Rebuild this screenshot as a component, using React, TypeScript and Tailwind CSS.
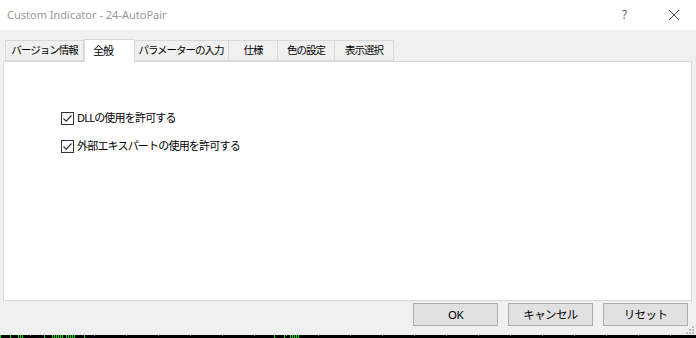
import React from "react";

const tabs = ["バージョン情報", "全般", "パラメーターの入力", "仕様", "色の設定", "表示選択"];
const tabWidths = [79, 51, 95, 49, 57, 59];

const greens = [0, 10, 18, 20, 22, 44, 52, 54, 56, 58, 60, 62, 66, 68, 70, 72, 74, 84, 274, 284, 290, 292, 294, 296, 298];

function CheckRow({ label }: { label: string }) {
  return (
    <label className="flex items-center gap-[3px] h-[14px] whitespace-nowrap">
      <span className="w-[13px] h-[13px] border border-[#333] bg-white flex items-center justify-center shrink-0">
        <svg width="11" height="11" viewBox="0 0 11 11">
          <path d="M1.5 5.5 L4.2 8.2 L9.5 2.5" fill="none" stroke="#333" strokeWidth="1.2" />
        </svg>
      </span>
      <span className="text-[11px] tracking-[-0.8px]">{label}</span>
    </label>
  );
}

export default function App() {
  return (
    <div
      className="w-[696px] h-[338px] bg-[#f0f0f0] flex flex-col text-[11.5px] tracking-[-0.6px] text-black overflow-hidden"
      style={{ fontFamily: '"Noto Sans", "Noto Sans CJK JP", sans-serif' }}
    >
      {/* Title bar */}
      <div className="h-[30px] bg-white flex items-center pl-[7px] shrink-0 tracking-normal">
        <span className="text-[#999] text-[11px]">Custom Indicator - 24-AutoPair</span>
        <span className="ml-auto text-[#666] text-[12px] w-[10px] mr-[36px]">?</span>
        <svg width="12" height="12" viewBox="0 0 12 12" className="mr-[16px]">
          <path d="M1 1 L11 11 M11 1 L1 11" stroke="#444" strokeWidth="1" />
        </svg>
      </div>

      {/* Tabs */}
      <div className="flex items-end h-[31px] pl-[5px] shrink-0 whitespace-nowrap text-[10.5px] tracking-[-1px]">
        {tabs.map((t, i) =>
          i === 1 ? (
            <div
              key={t}
              className="h-[23px] bg-white border border-b-0 border-[#d9d9d9] flex items-start pt-[3px] pl-[8px] -mb-px relative z-10 text-[11px]"
              style={{ width: tabWidths[i] }}
            >
              {t}
            </div>
          ) : (
            <div
              key={t}
              className="h-[21px] bg-[#f0f0f0] border border-[#d9d9d9] border-l-0 first:border-l flex items-center justify-center"
              style={{ width: tabWidths[i], marginLeft: i === 2 ? -1 : 0 }}
            >
              {t}
            </div>
          )
        )}
      </div>

      {/* Panel */}
      <div className="mx-[3px] mr-[4px] h-[240px] bg-white border border-[#d9d9d9] pt-[49px] pl-[57px] flex flex-col gap-[14px] shrink-0">
        <CheckRow label="DLLの使用を許可する" />
        <CheckRow label="外部エキスパートの使用を許可する" />
      </div>

      {/* Buttons */}
      <div className="flex justify-end gap-[10px] pr-[8px] pt-[2px] shrink-0">
        {["OK", "キャンセル", "リセット"].map((b) => (
          <button
            key={b}
            className="w-[85px] h-[23px] bg-[#e1e1e1] border border-[#adadad] flex items-center justify-center"
          >
            {b}
          </button>
        ))}
      </div>

      <div className="flex-1 flex justify-end items-end pr-[2px] pb-[1px]">
        <svg width="8" height="8" viewBox="0 0 8 8">
          <rect x="6" y="0" width="2" height="2" fill="#bcbcbc" />
          <rect x="3" y="3" width="2" height="2" fill="#bcbcbc" />
          <rect x="6" y="3" width="2" height="2" fill="#bcbcbc" />
          <rect x="0" y="6" width="2" height="2" fill="#bcbcbc" />
          <rect x="3" y="6" width="2" height="2" fill="#bcbcbc" />
          <rect x="6" y="6" width="2" height="2" fill="#bcbcbc" />
        </svg>
      </div>

      {/* Chart strip */}
      <svg width="696" height="4" className="block shrink-0">
        <rect width="696" height="4" fill="#000" />
        {Array.from({ length: 22 }, (_, i) => 30 + i * 32).map((x) => (
          <rect key={"g" + x} x={x} y={0} width={1} height={1} fill="#777" />
        ))}
        {greens.map((x) => (
          <rect key={"n" + x} x={x} y={0} width={1} height={4} fill="#00e000" />
        ))}
      </svg>
    </div>
  );
}
